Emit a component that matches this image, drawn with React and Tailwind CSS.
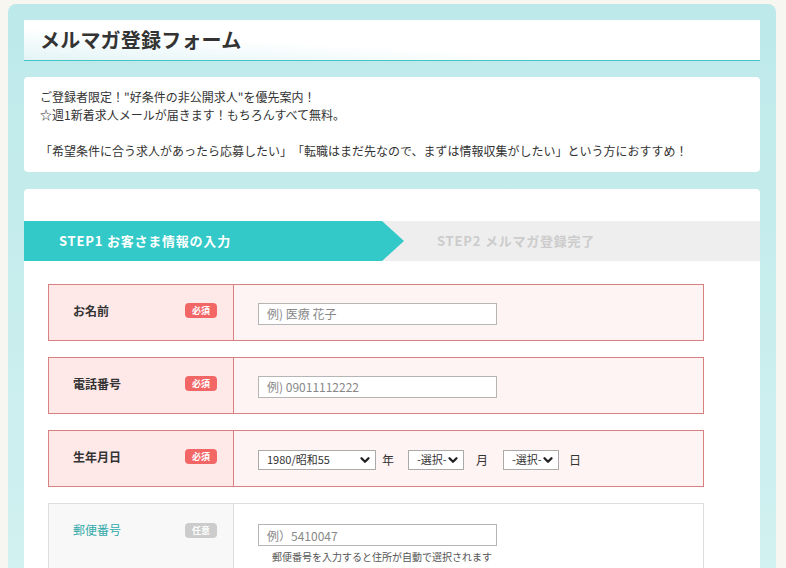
import { ChevronDown } from 'lucide-react';

const FONT = "font-['Meiryo','Noto_Sans_CJK_JP','Noto_Sans',sans-serif]";

function Badge({ required }) {
    return (
        <span
            className={`flex items-center justify-center w-8 h-[15px] rounded-sm text-[9px] font-bold leading-none text-white ${
                required ? 'bg-[#f26666]' : 'bg-[#cccccc]'
            }`}
        >
            {required ? '必須' : '任意'}
        </span>
    );
}

function Select({ value, width }) {
    return (
        <div className={`relative ${width} h-5`}>
            <select
                defaultValue={value}
                className="appearance-none w-full h-5 border border-[#aaaaaa] bg-white pl-2 text-[11px] text-[#333] outline-none"
            >
                <option>{value}</option>
            </select>
            <ChevronDown
                size={14}
                strokeWidth={4}
                className="absolute right-[4px] top-[3px] text-[#222] pointer-events-none"
            />
        </div>
    );
}

function Row({ label, required, children, top }) {
    const red = required;
    return (
        <div
            className={`flex border ${
                red ? 'border-[#d98080] bg-[#fff4f4]' : 'border-[#dddddd] bg-white'
            } ${top ? 'min-h-[70px]' : 'h-[57px]'}`}
        >
            <div
                className={`w-[185px] shrink-0 flex justify-between pl-6 pr-4 border-r ${
                    red ? 'border-[#d98080] bg-[#ffe8e8]' : 'border-[#dddddd] bg-[#f8f8f8]'
                } ${top ? 'items-start pt-[17px]' : 'items-center pb-1'}`}
            >
                <span
                    className={`text-[12px] leading-[18px] ${
                        red ? 'text-[#333] font-bold' : 'text-[#33aaaa]'
                    }`}
                >
                    {label}
                </span>
                <div className={top ? 'flex pt-[2px]' : 'flex'}>
                    <Badge required={required} />
                </div>
            </div>
            <div className={`flex-1 flex pl-6 ${top ? 'flex-col pt-5' : 'items-center pt-[2px]'}`}>{children}</div>
        </div>
    );
}

function TextInput({ placeholder }) {
    return (
        <input
            placeholder={placeholder}
            className="w-[239px] h-[22px] border border-[#b5b5b5] bg-white px-2 text-[12px] text-[#333] placeholder-[#888888] outline-none"
        />
    );
}

export default function App() {
    return (
        <div className={`min-h-screen bg-[#f8f6f0] pt-1 pl-2 pr-[10px] ${FONT} text-[#333]`}>
            <div className="min-h-[564px] rounded-lg bg-linear-to-b from-[#bde9ea] to-[#d3f1f1] px-4 pt-4">
                <div className="h-[41px] flex items-center px-4 border-b border-[#44c4c4] bg-linear-to-tr from-[#e3f4f6] via-white via-40% to-white">
                    <h1 className="text-[20px] font-bold text-[#333] tracking-[0.01em]">メルマガ登録フォーム</h1>
                </div>

                <div className="mt-4 rounded bg-white px-4 pt-[11px] pb-3 text-[12px] leading-[18px]">
                    <p>ご登録者限定！"好条件の非公開求人"を優先案内！</p>
                    <p>☆週1新着求人メールが届きます！もちろんすべて無料。</p>
                    <p>&nbsp;</p>
                    <p>「希望条件に合う求人があったら応募したい」　「転職はまだ先なので、まずは情報収集がしたい」という方におすすめ！</p>
                </div>

                <div className="mt-[17px] rounded-t bg-white pt-8 pb-10">
                    <div className="flex h-10 bg-[#eeeeee]">
                        <div className="w-[380px] h-10 flex items-center pl-[35px] bg-[#33c9c9] [clip-path:polygon(0_0,calc(100%-22px)_0,100%_50%,calc(100%-22px)_100%,0_100%)]">
                            <span className="text-[13px] font-bold text-white tracking-[0.06em]">STEP1 お客さま情報の入力</span>
                        </div>
                        <div className="flex-1 flex items-center pl-[33px]">
                            <span className="text-[13px] font-bold text-[#cccccc] tracking-[0.06em]">STEP2 メルマガ登録完了</span>
                        </div>
                    </div>

                    <div className="mt-[23px] pl-6 pr-14 flex flex-col gap-4">
                        <Row label="お名前" required>
                            <TextInput placeholder="例) 医療 花子" />
                        </Row>
                        <Row label="電話番号" required>
                            <TextInput placeholder="例) 09011112222" />
                        </Row>
                        <Row label="生年月日" required>
                            <div className="flex items-center text-[12px]">
                                <Select value="1980/昭和55" width="w-[118px]" />
                                <span className="ml-[6px]">年</span>
                                <div className="ml-[14px]">
                                    <Select value="-選択-" width="w-[56px]" />
                                </div>
                                <span className="ml-3">月</span>
                                <div className="ml-[15px]">
                                    <Select value="-選択-" width="w-[56px]" />
                                </div>
                                <span className="ml-[10px]">日</span>
                            </div>
                        </Row>
                        <Row label="郵便番号" top>
                            <TextInput placeholder="例）5410047" />
                            <p className="mt-[3px] pl-[14px] text-[10px] text-[#555]">
                                郵便番号を入力すると住所が自動で選択されます
                            </p>
                        </Row>
                    </div>
                </div>
            </div>
        </div>
    );
}
